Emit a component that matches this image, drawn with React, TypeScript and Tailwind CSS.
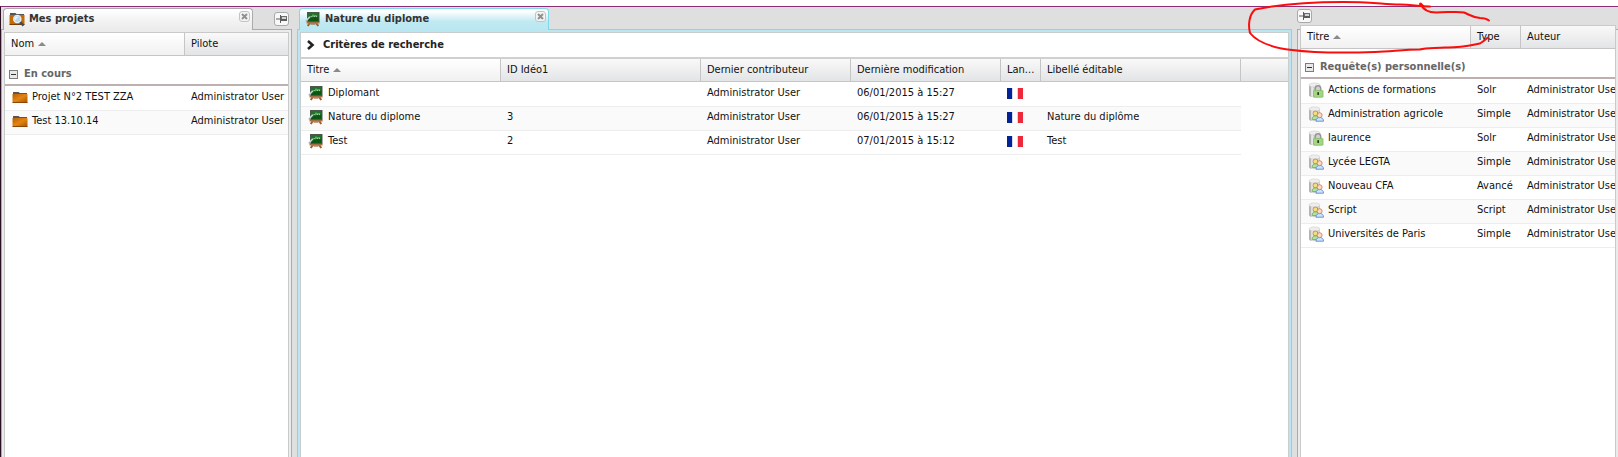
import type { ReactNode } from "react";

type Tone = "grey" | "cyan";

function BoardIcon() {
  return (
    <svg viewBox="0 0 16 16" className="size-4 shrink-0" aria-hidden="true">
      <path d="M5 11.500 2.800 15M11 11.500l2.200 3.500" stroke="#a85a25" strokeWidth="2" fill="none" />
      <path d="M1.500 10.800h12.800l.4 1.700H1.500z" fill="#c47a44" />
      <path d="M5.500 12.500h5v1h-5z" fill="#8f4a1d" />
      <rect x="2.500" y="1.500" width="11.500" height="9.300" fill="#0c5613" stroke="#4a5a4a" strokeWidth="1" />
      <path d="M3 2h10.500v3L3 8z" fill="#1c7425" />
      <path d="M5.500 5.500h1.300M8 3.600v2.400M9.500 4.500v1.400M11 4v1.600h1.200" stroke="#b9dcbb" strokeWidth=".9" fill="none" />
      <path d="M1 10 4.800 5.800" stroke="#c9d3df" strokeWidth="1.500" />
      <circle cx="1.600" cy="10" r="1" fill="#a9b0b8" />
    </svg>
  );
}

function FolderIcon() {
  return (
    <svg viewBox="0 0 16 16" className="size-4 shrink-0" aria-hidden="true">
      <defs>
        <linearGradient id="folder" x1="0" y1="0" x2="1" y2="1">
          <stop offset="0" stopColor="#b55f04" />
          <stop offset=".5" stopColor="#e38415" />
          <stop offset="1" stopColor="#a95400" />
        </linearGradient>
      </defs>
      <path d="M1 5V3h5.600l1.200 1H15v2H1z" fill="#565656" />
      <path d="M.500 5h15v8.500H.500z" fill="url(#folder)" />
      <path d="M.500 13h15v1H.500z" fill="#8a4703" />
    </svg>
  );
}

function FolderSearchIcon() {
  return (
    <svg viewBox="0 0 16 16" className="size-4 shrink-0" aria-hidden="true">
      <path d="M1 4V2h5.400l1.200 1H15v2H1z" fill="#565656" />
      <path d="M.500 4h15v9.400H.500z" fill="#c26c08" />
      <path d="M.500 13h15v1H.500z" fill="#7a3d02" />
      <path d="m10.600 10.600 4 4" stroke="#3b4a63" strokeWidth="2.200" />
      <circle cx="8.300" cy="8" r="3.600" fill="#b9d8f2" stroke="#e9eef3" strokeWidth="1.400" />
      <path d="M6.300 8.400a2.300 2.300 0 0 1 2.400-2.200" stroke="#fff" strokeWidth="1.200" fill="none" />
    </svg>
  );
}

function Cylinder() {
  return (
    <>
      <path d="M1 3.200v10c1 1.400 3.600 2.100 6 2.100s4.500-.4 5-1V3.200z" fill="#d2d2d2" />
      <path d="M1 3.200v10c.7 1 1.600 1.500 2.600 1.800V3.200z" fill="#b4b4b4" />
      <path d="M3.200 4v10.600c.7.300 1.400.4 2 .5V4z" fill="#e8e8e8" />
      <ellipse cx="6.500" cy="3" rx="5.500" ry="2" fill="#eeeeee" stroke="#c9c9c9" strokeWidth=".6" />
    </>
  );
}

function LockIcon() {
  return (
    <svg viewBox="0 0 16 16" className="size-4 shrink-0" aria-hidden="true">
      <Cylinder />
      <path d="M7.300 9.200V6.400a2.700 2.700 0 0 1 5.400 0v2.800" fill="none" stroke="#979797" strokeWidth="1.500" />
      <rect x="5.500" y="8.400" width="9.500" height="6.800" rx=".6" fill="#a3d583" stroke="#84bb66" strokeWidth=".8" />
      <rect x="9.300" y="10.200" width="1.700" height="2.800" fill="#26401b" />
    </svg>
  );
}

function UsersIcon() {
  return (
    <svg viewBox="0 0 16 16" className="size-4 shrink-0" aria-hidden="true">
      <Cylinder />
      <path d="M4 13.600c0-2.600 1.400-3.900 3.400-3.900s3.400 1.300 3.400 3.900z" fill="#b4e09a" stroke="#6bab58" strokeWidth=".8" />
      <circle cx="7.400" cy="7.400" r="2.400" fill="#f6dc86" stroke="#b8862c" strokeWidth=".8" />
      <path d="M8 15.200c0-2.600 1.500-3.800 3.700-3.800s3.800 1.200 3.800 3.800z" fill="#cfe2fb" stroke="#5a8cd6" strokeWidth=".9" />
      <circle cx="11.600" cy="9.200" r="2.500" fill="#fbdcc0" stroke="#cf7a48" strokeWidth=".8" />
    </svg>
  );
}

function FrenchFlag() {
  return (
    <svg viewBox="0 0 16 11" className="h-[11px] w-4" role="img" aria-label="Français">
      <rect width="16" height="11" fill="#fff" />
      <rect width="5" height="11" fill="#002395" />
      <rect x="5" width="1" height="11" fill="#d5d9ec" />
      <rect x="10" width="1" height="11" fill="#e3d3da" />
      <rect x="11" width="5" height="11" fill="#ed2939" />
    </svg>
  );
}

function CloseButton() {
  return (
    <button aria-label="Fermer" className="flex size-[11px] items-center justify-center rounded-[3px] border border-[#c2c2c2] bg-[#f4f4f4]">
      <svg viewBox="0 0 7 7" className="size-[7px] shrink-0" aria-hidden="true">
        <path d="m1 1 5 5M6 1 1 6" stroke="#909090" strokeWidth="2" />
      </svg>
    </button>
  );
}

function PinButton() {
  return (
    <button aria-label="Épingler" className="flex h-3.5 w-[15px] items-center justify-center rounded-[3px] border border-[#a9a9a9] bg-[#f8f8f8]">
      <svg viewBox="0 0 11 8" className="h-2 w-[11px] shrink-0" aria-hidden="true">
        <path d="M0 4h4M4.500 0v8" stroke="#5c5c5c" strokeWidth="1" />
        <rect x="5.500" y="1.500" width="5" height="4" fill="#d2d2d2" stroke="#6c6c6c" />
        <rect x="5" y="4" width="6" height="2" fill="#5c5c5c" />
      </svg>
    </button>
  );
}

function Tab({ tone, icon, children }: { tone: Tone; icon: ReactNode; children: ReactNode }) {
  const look =
    tone === "cyan"
      ? "border-[#7fd9ea] bg-linear-to-b from-white from-10% via-[#c0e9f2] via-60% to-[#b9e7f1]"
      : "border-[#ababab] bg-linear-to-b from-white via-[#f4f4f4] to-[#ebebeb]";
  return (
    <div className={`ml-0.5 flex h-[22px] w-[250px] justify-between rounded-t-[4px] border border-b-0 pr-0.5 pl-[5px] ${look}`}>
      <button className="flex h-5 items-center gap-1 leading-4 font-bold text-[#333]">
        {icon}
        {children}
      </button>
      <div className="pt-0.5">
        <CloseButton />
      </div>
    </div>
  );
}

function Header({ label, sorted, last }: { label: string; sorted?: boolean; last?: boolean }) {
  return (
    <th
      className={`h-[23px] border-b border-[#c5c5c5] p-0 text-left font-normal ${last ? "" : "border-r"} ${
        sorted ? "bg-linear-to-b from-white to-[#f1f1f1]" : "bg-linear-to-b from-[#f9f9f9] to-[#e3e4e6]"
      }`}
    >
      {label && (
        <button className="flex w-full items-center gap-1 px-1.5 leading-4 whitespace-nowrap">
          {label}
          {sorted && (
            <svg viewBox="0 0 8 4" className="h-1 w-2 shrink-0" aria-hidden="true">
              <path d="M4 0 8 4H0z" fill="#8a8a8a" />
            </svg>
          )}
        </button>
      )}
    </th>
  );
}

function Cell({ icon, children }: { icon?: ReactNode; children?: ReactNode }) {
  return (
    <td className="h-6 border-t border-[#ededed] p-0 pt-0.5 align-top group-first:border-white group-last:h-[25px] group-last:border-b">
      <div className={`flex items-center gap-1 overflow-hidden leading-4 whitespace-nowrap ${icon ? "px-[7px]" : "px-1.5"}`}>
        {icon}
        {children}
      </div>
    </td>
  );
}

function GroupRow({ label, span }: { label: string; span: number }) {
  return (
    <tbody>
      <tr>
        <th colSpan={span} className="h-[30px] border-b-2 border-[#bcb0b0] p-0 pb-0.5 text-left align-bottom">
          <button className="flex items-center gap-1.5 pl-1 leading-4 font-bold text-[#666]">
            <svg viewBox="0 0 9 9" className="size-[9px] shrink-0" aria-hidden="true">
              <rect x=".5" y=".5" width="8" height="8" fill="#e9e9e9" stroke="#7d7d7d" />
              <path d="M2 4.500h5" stroke="#333" />
            </svg>
            {label}
          </button>
        </th>
      </tr>
    </tbody>
  );
}

const tableClass = "w-full table-fixed border-separate border-spacing-0";
const rowClass = "group even:bg-[#fafafa]";

const projects = ["Projet N°2 TEST ZZA", "Test 13.10.14"];

const diplomas = [
  { title: "Diplomant", id: "", date: "06/01/2015 à 15:27", label: "" },
  { title: "Nature du diplome", id: "3", date: "06/01/2015 à 15:27", label: "Nature du diplôme" },
  { title: "Test", id: "2", date: "07/01/2015 à 15:12", label: "Test" },
];

const queries = [
  { title: "Actions de formations", type: "Solr", locked: true },
  { title: "Administration agricole", type: "Simple", locked: false },
  { title: "laurence", type: "Solr", locked: true },
  { title: "Lycée LEGTA", type: "Simple", locked: false },
  { title: "Nouveau CFA", type: "Avancé", locked: false },
  { title: "Script", type: "Script", locked: false },
  { title: "Universités de Paris", type: "Simple", locked: false },
];

function ProjectsPanel() {
  return (
    <section className="flex w-[291px] shrink-0 flex-col">
      <div className="z-10 -mb-px flex items-start justify-between pt-px pr-[3px]">
        <Tab tone="grey" icon={<FolderSearchIcon />}>
          Mes projets
        </Tab>
        <div className="pt-1">
          <PinButton />
        </div>
      </div>
      <div className="flex flex-1 border border-b-0 border-[#ababab] bg-[#ebebeb] px-0.5 pt-0.5">
        <div className="flex-1 border border-b-0 border-[#c9c9c9] bg-white">
          <table className={tableClass}>
            <colgroup>
              <col className="w-[180px]" />
              <col />
            </colgroup>
            <thead>
              <tr>
                <Header label="Nom" sorted />
                <Header label="Pilote" last />
              </tr>
            </thead>
            <GroupRow label="En cours" span={2} />
            <tbody>
              {projects.map((name) => (
                <tr key={name} className={rowClass}>
                  <Cell icon={<FolderIcon />}>{name}</Cell>
                  <Cell>Administrator User</Cell>
                </tr>
              ))}
            </tbody>
          </table>
        </div>
      </div>
    </section>
  );
}

function DiplomaPanel() {
  return (
    <main className="flex min-w-0 flex-1 flex-col">
      <div className="z-10 -mb-px flex pt-px">
        <Tab tone="cyan" icon={<BoardIcon />}>
          Nature du diplome
        </Tab>
      </div>
      <div className="flex flex-1 border border-b-0 border-[#7fd9ea] bg-[#b9e7f1] px-0.5 pt-0.5">
        <div className="flex-1 border border-b-0 border-[#c9cdce] bg-white">
          <button className="flex h-6 w-full items-center gap-2 pl-1.5 leading-4 font-bold text-[#222]">
            <svg viewBox="0 0 8 10" className="h-2.5 w-2 shrink-0" aria-hidden="true">
              <path d="m1 1 4.500 4L1 9" fill="none" stroke="#222" strokeWidth="2.600" />
            </svg>
            Critères de recherche
          </button>
          <table className={`${tableClass} border-t-2 border-[#d0d0d0]`}>
            <colgroup>
              <col className="w-[200px]" />
              <col className="w-[200px]" />
              <col className="w-[150px]" />
              <col className="w-[150px]" />
              <col className="w-10" />
              <col className="w-[200px]" />
              <col />
            </colgroup>
            <thead>
              <tr>
                <Header label="Titre" sorted />
                <Header label="ID Idéo1" />
                <Header label="Dernier contributeur" />
                <Header label="Dernière modification" />
                <Header label="Lan..." />
                <Header label="Libellé éditable" />
                <Header label="" last />
              </tr>
            </thead>
            <tbody>
              {diplomas.map((row) => (
                <tr key={row.title} className={rowClass}>
                  <Cell icon={<BoardIcon />}>{row.title}</Cell>
                  <Cell>{row.id}</Cell>
                  <Cell>Administrator User</Cell>
                  <Cell>{row.date}</Cell>
                  <Cell>
                    <span className="flex h-4 items-center">
                      <FrenchFlag />
                    </span>
                  </Cell>
                  <Cell>{row.label}</Cell>
                  <td className="bg-white p-0" />
                </tr>
              ))}
            </tbody>
          </table>
        </div>
      </div>
    </main>
  );
}

function QueriesPanel() {
  return (
    <aside className="flex w-[321px] shrink-0 flex-col">
      <div className="flex h-[22px] items-start pt-0.5">
        <PinButton />
      </div>
      <div className="flex flex-1 border-t border-l border-[#ababab] bg-[#ebebeb] px-0.5 pt-0.5">
        <div className="-mt-[7px] min-w-0 flex-1 border border-b-0 border-[#c9c9c9] bg-white">
          <table className={tableClass}>
            <colgroup>
              <col className="w-[170px]" />
              <col className="w-[50px]" />
              <col />
            </colgroup>
            <thead>
              <tr>
                <Header label="Titre" sorted />
                <Header label="Type" />
                <Header label="Auteur" last />
              </tr>
            </thead>
            <GroupRow label="Requête(s) personnelle(s)" span={3} />
            <tbody>
              {queries.map((row) => (
                <tr key={row.title} className={rowClass}>
                  <Cell icon={row.locked ? <LockIcon /> : <UsersIcon />}>{row.title}</Cell>
                  <Cell>{row.type}</Cell>
                  <Cell>Administrator Use</Cell>
                </tr>
              ))}
            </tbody>
          </table>
        </div>
      </div>
    </aside>
  );
}

function RedPenMark() {
  return (
    <svg
      viewBox="0 0 378 60"
      className="pointer-events-none absolute top-0 right-0 z-20 h-[60px] w-[378px]"
      fill="none"
      stroke="#fb0d0d"
      strokeWidth="2"
      strokeLinecap="round"
      strokeLinejoin="round"
      aria-hidden="true"
    >
      <path d="M190 6.500C178 6.500 172 4.500 160 4.500C145 4.500 138 2.500 120 2.200C85 1.500 45 3 15 9.500C9 15 8 25 10 33C18 43 35 48 52 50C75 53 105 53 135 52C155 51 165 49.500 180 49.500C187 47 195 48.500 205 47.500C220 48 232 45 240 43.500C244 41 246 39 248 37.500" />
      <path d="M181 4.500C183 9 188 12.500 196 12.500C208 12.500 217 11 224 12.500C230 15 233 17.500 240 18C244 18 247 19 249 20.500" />
      <path d="m180.500 4 2.500 2.500" strokeWidth="3" />
    </svg>
  );
}

export default function App() {
  return (
    <div className="relative flex min-h-screen flex-col overflow-hidden bg-white font-['DejaVu_Sans_Condensed','DejaVu_Sans',sans-serif] text-[11px] text-[#111]">
      <div className="h-1.5" />
      <div className="flex flex-1 gap-[5px] border-t border-l border-t-[#8c2f74] border-l-[#2b0f22] bg-[#dfdfdf]">
        <ProjectsPanel />
        <DiplomaPanel />
        <QueriesPanel />
      </div>
      <RedPenMark />
    </div>
  );
}
